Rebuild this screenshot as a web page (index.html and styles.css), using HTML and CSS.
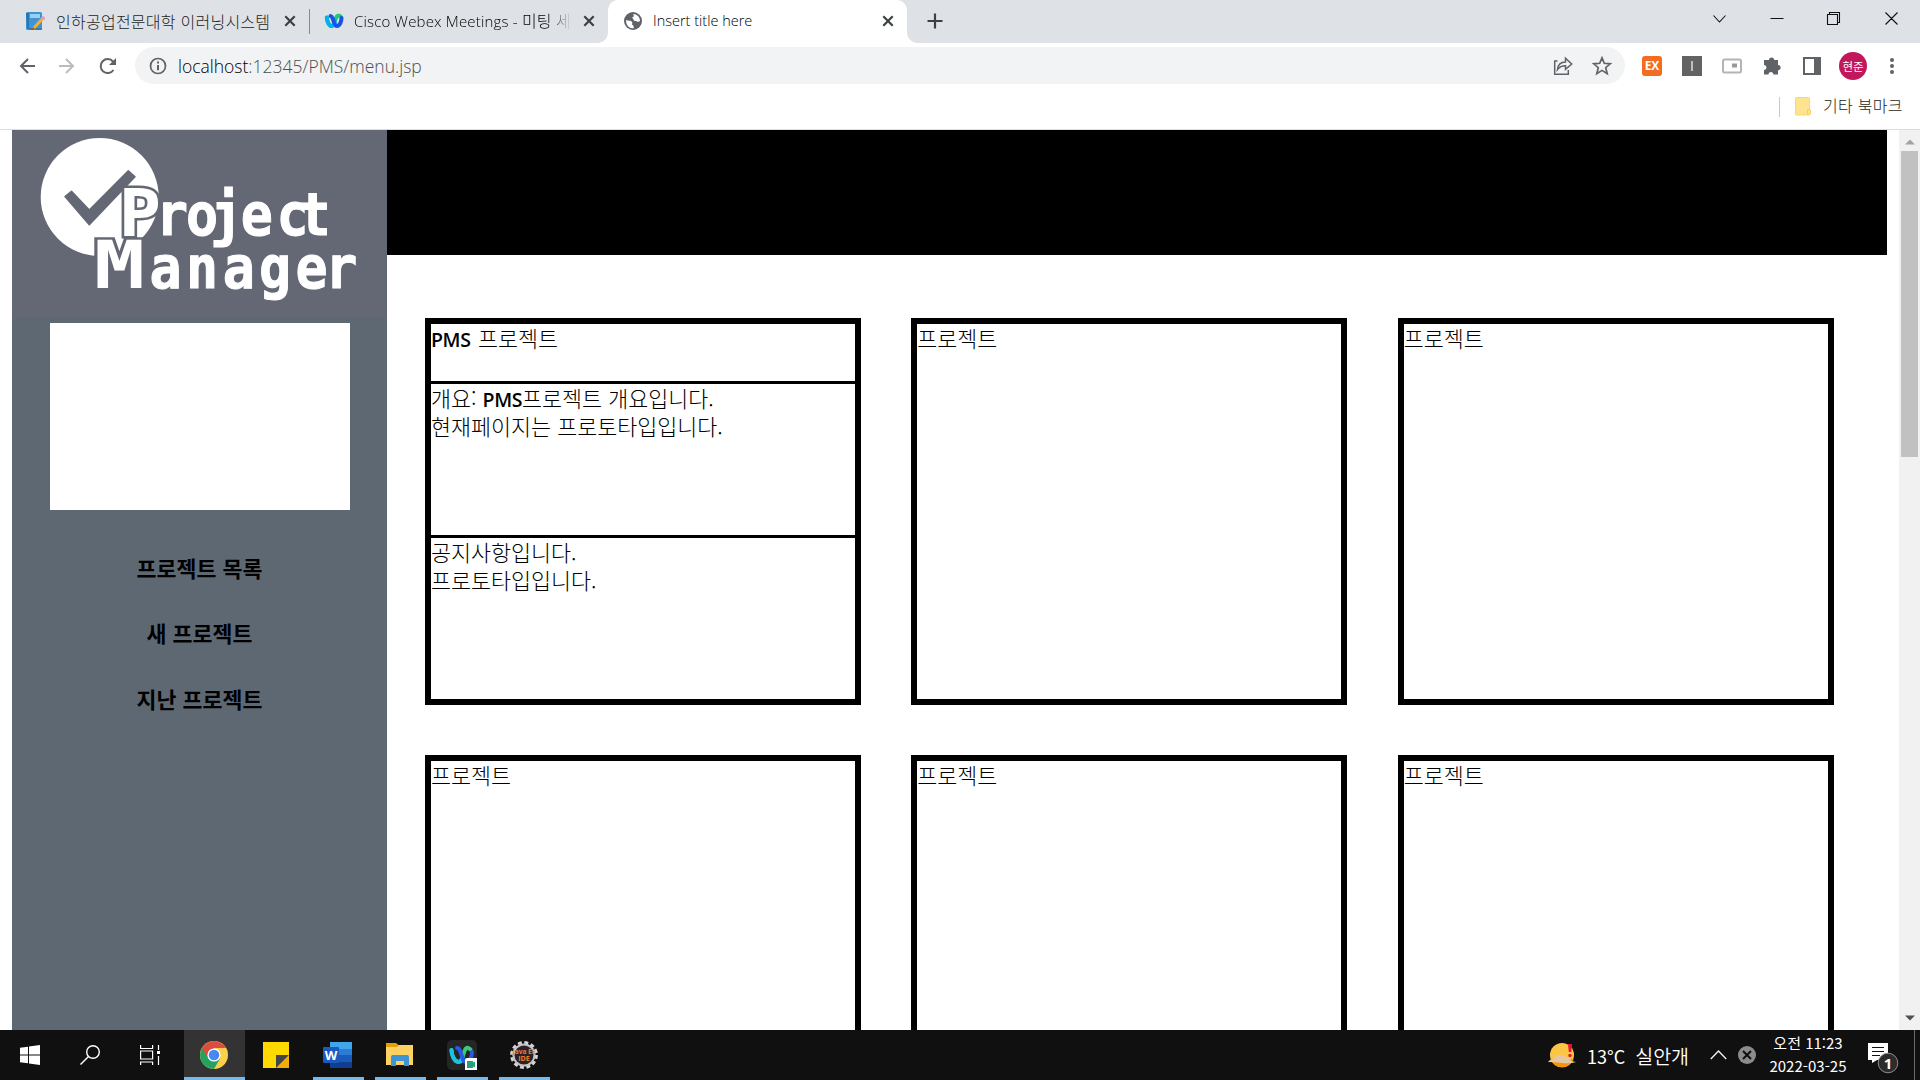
FILE: index.html
```html
<!DOCTYPE html>
<html lang="ko">
<head>
<meta charset="utf-8">
<title>Insert title here</title>
<link rel="stylesheet" href="styles.css">
</head>
<body>
<div class="window">
  <header class="tabstrip">
    <div class="tab tab-first">
      <svg class="favicon" width="20" height="20" viewBox="0 0 20 20"><rect x="1" y="1" width="16" height="18" rx="1.5" fill="#3f94d4"/><path d="M1 2h3v16H2z" fill="#2378b5"/><path d="M5 3h10v4H5z" fill="#9bd0f2"/><path d="M4 18h13" stroke="#1d679f"/><path d="M18 7 8 18" stroke="#f6ad38" stroke-width="3"/><path d="m17 6 3 2" stroke="#dba0c5" stroke-width="3"/><path d="m7 19 1-3 2 2z" fill="#875025"/></svg>
      <span class="tab-title t1">인하공업전문대학 이러닝시스템</span>
      <svg class="close" width="12" height="12" viewBox="0 0 12 12"><path d="m1.3 1.3 9.4 9.4m0-9.4-9.4 9.4"/></svg>
    </div>
    <div class="tab tab-second">
      <svg class="favicon" width="20" height="16" viewBox="0 0 20 16"><path d="M2.8 4.5C3.2 9 5 13 7.5 13s3-4 4.5-8c.9-2.5 3-3 4.6-1.5" fill="none" stroke="#22c96c" stroke-width="4" stroke-linecap="round"/><path d="M2.8 4.5C3.2 9 5 13 7.5 13s3.6-3 3.2-6" fill="none" stroke="#00b2ee" stroke-width="4" stroke-linecap="round"/><path d="M6.5 3c3 0 3 10 6.3 10C16 13 17.5 8 17.5 5" fill="none" stroke="#1754e6" stroke-width="4" stroke-linecap="round"/></svg>
      <span class="tab-title t2">Cisco Webex Meetings - <span class="ko">미팅 세</span></span>
      <svg class="close" width="12" height="12" viewBox="0 0 12 12"><path d="m1.3 1.3 9.4 9.4m0-9.4-9.4 9.4"/></svg>
    </div>
    <div class="tab tab-active">
      <svg class="favicon" width="18" height="18" viewBox="0 0 18 18"><circle cx="9" cy="9" r="9" fill="#5f6368"/><path d="M2 8c2 1 5 0 6 2 1 1-1 3 1 3l1 3c-4 1-8-2-8-8zM9 2c4 0 7 3 7 7l-2 1c-1-1-2-1-3-1-2 0-1-3-3-3 0-1 2-1 2-2z" fill="#fff"/></svg>
      <span class="tab-title t3">Insert title here</span>
      <svg class="close" width="12" height="12" viewBox="0 0 12 12"><path d="m1.3 1.3 9.4 9.4m0-9.4-9.4 9.4"/></svg>
    </div>
    <svg class="newtab" width="16" height="16" viewBox="0 0 16 16"><path d="M8 .5v15M.5 8h15" stroke="#3c4043" stroke-width="2.2"/></svg>
    <svg class="window-controls" width="184" height="16" viewBox="0 0 184 16" fill="none" stroke="#111" stroke-width="1.1"><path d="m.5 4.500 6 6.500 6-6.500M57.500 7.500h13M114.500 3.500h10v10h-10zM116.500 3.500v-2h10v10h-2M172.500 1.500l12 12m0-12-12 12"/></svg>
  </header>

  <div class="toolbar">
    <svg class="nav" width="100" height="20" viewBox="0 0 100 20" fill="none" stroke="#5f6368" stroke-width="2"><path d="M16 10H2m7-7-7 7 7 7"/><path d="M40 10h14m-7-7 7 7-7 7" stroke="#babcbe"/><path d="M94.500 14a7 7 0 1 1-.5-8.500"/><path d="M97 2v7h-7z" fill="#5f6368" stroke="none"/></svg>
    <div class="omnibox">
      <svg width="18" height="18" viewBox="0 0 18 18"><circle cx="9" cy="9" r="7.500" fill="none" stroke="#5f6368" stroke-width="1.700"/><path d="M9 8v5.200M9 4.600v2" stroke="#5f6368" stroke-width="2"/></svg>
      <span class="url"><span class="host">localhost</span>:12345/PMS/menu.jsp</span>
      <svg class="share" width="60" height="20" viewBox="0 0 60 20" fill="none" stroke="#5f6368" stroke-width="1.500"><path d="M4.500 5H1.700v13.300h13.600V14"/><path d="M4.500 13.500C5 8.500 8 6 12.500 6V2.300L18.700 8l-6.200 5.300V9.700C9 9.700 6.500 10.800 4.500 13.500z"/><path d="m49 1.800 2.300 5.500 6 .5-4.600 3.900 1.500 5.900L49 14.400l-5.200 3.200 1.500-5.900-4.600-3.900 6-.5z" stroke-width="1.700"/></svg>
    </div>
    <div class="extensions">
      <span class="ext ex">EX</span>
      <svg width="20" height="20" viewBox="0 0 20 20"><path d="M0 0h20v20H0z" fill="#636363"/><path d="M10 5v10" stroke="#ddd" stroke-width="1.500"/></svg>
      <svg width="20" height="16" viewBox="0 0 20 16"><rect x="1" y="1.500" width="18" height="13" rx="1.500" fill="#fff" stroke="#b4b4b4" stroke-width="2"/><path d="M10 5.500h5v4h-5z" fill="#9a9a9a"/></svg>
      <svg width="20" height="20" viewBox="0 0 20 20"><path d="M2 4h5a2.600 2.600 0 0 1 5.200 0H16v5a2.600 2.600 0 0 1 0 5.200V18.500h-4.500a2.500 2.500 0 0 0-5 0H2v-4.500a2.500 2.500 0 0 0 0-5z" fill="#5f6368"/></svg>
      <svg width="20" height="20" viewBox="0 0 20 20"><path d="M2 2h16v16H2z" fill="none" stroke="#5f6368" stroke-width="2"/><path d="M12 2h6v16h-6z" fill="#5f6368"/></svg>
      <span class="avatar">현준</span>
      <svg class="more" width="6" height="18" viewBox="0 0 6 18" fill="#5f6368"><circle cx="3" cy="3" r="2"/><circle cx="3" cy="9" r="2"/><circle cx="3" cy="15" r="2"/></svg>
    </div>
  </div>

  <div class="bookmarks">
    <span class="divider"></span>
    <svg width="17" height="19" viewBox="0 0 17 19"><rect x=".5" y=".5" width="14" height="17.500" rx="1" fill="#ffe490" stroke="#fcd866"/><rect x="12.500" y="12.500" width="3" height="5" rx="1" fill="#ffe490" stroke="#f7cf50"/></svg>
    <span class="bookmark-name">기타 북마크</span>
  </div>

  <div class="viewport">
    <aside class="sidebar">
      <svg class="logo" width="375" height="188" viewBox="0 0 375 188">
        <circle cx="87.700" cy="67" r="59" fill="#fff"/>
        <path d="m53 66.500 6.500-5.200L77.300 80l39-39.300 6.700 6-45.700 48z" fill="#636874" stroke="#636874" stroke-width="1.500" stroke-linejoin="round"/>
        <g class="letters">
          <text class="cut" transform="translate(128 106) scale(1.080 1)">P</text>
          <text class="cut" transform="translate(107.500 158) scale(1.300 1)">M</text>
          <text class="run" transform="scale(.92 1)" y="105" x="174 206.500 233 266 305 329">roject</text>
          <text class="run" transform="scale(.92 1)" y="158" x="167 206.500 246.500 286 325.500 358">anager</text>
        </g>
      </svg>
      <div class="profile"></div>
      <nav class="menu"><a>프로젝트 목록</a><a>새 프로젝트</a><a>지난 프로젝트</a></nav>
    </aside>
    <main class="content">
      <div class="banner"></div>
      <div class="cards">
        <section class="card">
          <div class="card-title"><b>PMS</b> 프로젝트</div>
          <div class="card-summary">개요: <b>PMS</b>프로젝트 개요입니다.<br>현재페이지는 프로토타입입니다.</div>
          <div class="card-notice">공지사항입니다.<br>프로토타입입니다.</div>
        </section>
        <section class="card">프로젝트</section>
        <section class="card">프로젝트</section>
        <section class="card">프로젝트</section>
        <section class="card">프로젝트</section>
        <section class="card">프로젝트</section>
      </div>
    </main>
    <div class="scrollbar">
      <svg width="10" height="6" viewBox="0 0 10 6"><path d="m0 5.500 5-5 5 5z" fill="#a3a3a3"/></svg>
      <div class="thumb"></div>
      <svg width="10" height="6" viewBox="0 0 10 6"><path d="m0 .5 5 5 5-5z" fill="#505050"/></svg>
    </div>
  </div>

  <footer class="taskbar">
    <div class="task start"><svg width="20" height="20" viewBox="0 0 20 20"><path d="M0 2.800 8 1.700v7.800H0zM9 1.500 20 0v9.500H9zM0 10.500h8v7.800l-8-1.100zM9 10.500h11V20L9 18.500z" fill="#fff"/></svg></div>
    <div class="task search"><svg width="20" height="20" viewBox="0 0 20 20" fill="none" stroke="#fff" stroke-width="1.400"><circle cx="13" cy="7" r="6.300"/><path d="M8.500 11.500.5 19.500"/></svg></div>
    <div class="task view"><svg width="20" height="20" viewBox="0 0 20 20" fill="none" stroke="#fff" stroke-width="1.200"><path d="M.6 0v3.500h12V0M.6 6h12v8H.6zM.6 20v-3h12v3M18.500 0v5M18.500 11v9"/><path d="M17 6h3v3h-3z" fill="#fff" stroke="none"/></svg></div>
    <div class="task chrome"><svg width="28" height="28" viewBox="0 0 28 28"><circle cx="14" cy="14" r="14" fill="#fdd04b"/><path d="M14 14 1.900 7A14 14 0 0 0 14 28l6.100-10.500z" fill="#24a260"/><path d="M1.900 7A14 14 0 0 1 26.100 7H14l-6 10z" fill="#dc4c40"/><circle cx="14" cy="14" r="6.600" fill="#fff"/><circle cx="14" cy="14" r="5.300" fill="#4688f4"/></svg></div>
    <div class="task note"><svg width="26" height="26" viewBox="0 0 26 26"><path d="M0 0h26v26H0z" fill="#ffd900"/><path d="M13 26h13V13z" fill="#f2ae0b"/><path d="M13 13h13L13 26z" fill="#454545"/></svg></div>
    <div class="task running"><svg width="30" height="28" viewBox="0 0 30 28"><path d="M7 1h22v7H7z" fill="#41a5ee"/><path d="M7 8h22v6H7z" fill="#2b7cd3"/><path d="M7 14h22v7H7z" fill="#185abd"/><path d="M7 21h22v6H7z" fill="#103f91"/><rect y="6" width="16" height="16" rx="1" fill="#185abd"/><text x="8" y="18.500" class="word">W</text></svg></div>
    <div class="task running"><svg width="28" height="24" viewBox="0 0 28 24"><path d="M0 0h10l2.500 2H27v7H0z" fill="#e2a106"/><path d="M0 4h11l2-2h14v20H0z" fill="#fdd262"/><path d="M5 23V14q0-2 2-2h14q2 0 2 2v9h-5v-5h-8v5z" fill="#3c94d5"/></svg></div>
    <div class="task running"><svg width="30" height="30" viewBox="0 0 30 30"><rect width="30" height="30" rx="5" fill="#252525"/><path d="M4.500 10c0 5 3 12 7 12s4-8 7-13c1.500-2 3.500-1 5 .5" fill="none" stroke="#38cb75" stroke-width="4" stroke-linecap="round"/><path d="M4.500 10c0 5 3 12 7 12 3 0 4-3 4-6" fill="none" stroke="#1ac0e8" stroke-width="4" stroke-linecap="round"/><path d="M10 8c5 0 4 14 9 14 4 0 6-6 6-10" fill="none" stroke="#2758e8" stroke-width="4" stroke-linecap="round"/><path d="M18 30V20q0-2 2-2h10v12z" fill="#fff"/><path d="M20 21h6v1.500l2-1v6l-2-1V28h-6z" fill="#27a17b"/></svg></div>
    <div class="task running"><svg width="28" height="28" viewBox="0 0 28 28"><circle cx="14" cy="14" r="12.400" fill="none" stroke="#d5d5d5" stroke-width="3" stroke-dasharray="3.900 2.590"/><circle cx="14" cy="14" r="10.500" fill="#28222e" stroke="#c4c4c4" stroke-width="2"/><text x="14" y="13" class="ide" textLength="23" lengthAdjust="spacingAndGlyphs">Java EE</text><text x="14" y="20" class="ide">IDE</text></svg></div>
    <div class="tray">
      <svg class="weather" width="28" height="25" viewBox="0 0 28 25"><circle cx="14" cy="12" r="12" fill="#fdc544"/><path d="M2.500 16h23A12 12 0 0 1 2.500 16z" fill="#f6930e"/><path d="M0 19q2-3 6-3 0-4 5-4 5-1 7 3 4-1 5 3l5 1q-5 2-14 1T0 19z" fill="#e6c7a2"/><path d="M20 1h4l-.7 8h-2.500z" fill="#e81232"/><circle cx="22" cy="12.500" r="1.700" fill="#e81232"/></svg>
      <span class="weather-text">13°C&nbsp; <span class="haze">실안개</span></span>
      <svg class="chevron" width="17" height="10" viewBox="0 0 17 10"><path d="m.8 9 7.700-8 7.700 8" fill="none" stroke="#eee" stroke-width="1.400"/></svg>
      <svg class="status" width="18" height="18" viewBox="0 0 18 18"><circle cx="9" cy="9" r="9" fill="#8c8c8c"/><path d="m5 5 8 8m0-8-8 8" stroke="#101010" stroke-width="2"/></svg>
      <div class="clock"><span>오전 11:23</span><span class="date">2022-03-25</span></div>
      <svg class="notifications" width="31" height="31" viewBox="0 0 31 31"><path d="M0 0h20v17H9l-5 3v-3H0z" fill="#fff"/><path d="M4 4.500h12M4 8.500h12M4 12.500h8" stroke="#101010" stroke-width="1.200"/><circle cx="20" cy="20" r="9.800" fill="#2c2c2c" stroke="#8c8c8c"/><text x="20" y="25.500" class="count">1</text></svg>
      <span class="desktop-edge"></span>
    </div>
  </footer>
</div>
</body>
</html>
```
FILE: styles.css
```css
* { box-sizing: border-box; }
body { margin: 0; font-family: "Noto Sans CJK KR", sans-serif; background: #fff; overflow: hidden; }
svg { display: block; flex: none; }
.window { width: 1920px; height: 1080px; display: flex; flex-direction: column; overflow: hidden; }

.tabstrip { height: 43px; flex: none; display: flex; background: #dee1e6; color: #1c1e20; }
.tab { display: flex; align-items: center; height: 43px; padding-bottom: 1px; }
.tab-title { font-size: 16px; font-weight: 300; line-height: 24px; white-space: nowrap; overflow: hidden; padding-bottom: 1px; }
.close { fill: none; stroke: #3c4043; stroke-width: 2.2; }
.tab-first { width: 310px; padding-left: 25px; }
.tab-first::after { content: ""; width: 1px; height: 25px; margin-left: 13px; background: #858a90; }
.t1 { width: 215px; margin: 0 14px 0 11px; letter-spacing: .25px; }
.tab-second { width: 298px; padding-left: 14px; }
.t2 { width: 218px; margin: 0 11px 0 10px; font-family: "Open Sans", "Noto Sans CJK KR", sans-serif; font-size: 15px; letter-spacing: .18px; color: #000; -webkit-mask-image: linear-gradient(90deg, #000 88%, transparent); mask-image: linear-gradient(90deg, #000 88%, transparent); }
.ko { font-size: 16px; }
.tab-active { width: 299px; padding-left: 16px; background: #fff; border-radius: 10px 10px 0 0; position: relative; }
.tab-active::before, .tab-active::after { content: ""; position: absolute; bottom: 0; width: 10px; height: 10px; }
.tab-active::before { left: -10px; background: radial-gradient(circle at 0 0, transparent 9.5px, #fff 10px); }
.tab-active::after { right: -10px; background: radial-gradient(circle at 100% 0, transparent 9.5px, #fff 10px); }
.t3 { width: 219px; margin: 0 10px 0 11px; font-family: "Open Sans", sans-serif; font-size: 14.5px; color: #000; }
.newtab { margin: 13px 0 0 20px; }
.window-controls { margin: 11px 23px 0 auto; overflow: visible; }

.toolbar { height: 45px; flex: none; display: flex; align-items: center; }
.nav { margin-left: 19px; }
.omnibox { width: 1490px; height: 37px; margin-left: 16px; padding: 0 12px 0 14px; display: flex; align-items: center; border-radius: 19px; background: #f1f3f4; }
.url { margin-left: 11px; font-family: "Open Sans", sans-serif; font-weight: 300; font-size: 17.5px; line-height: 30px; color: #4b4f53; padding-top: 1px; }
.host { color: #000; }
.share { margin-left: auto; }
.extensions { display: flex; align-items: center; gap: 20px; margin-left: 17px; }
.ext { width: 20px; height: 20px; border-radius: 3px; background: #f36c21; color: #fff; font: bold 12px/20px "Open Sans", sans-serif; text-align: center; }
.avatar { width: 28px; height: 28px; margin: 0 -2px 0 -3px; border-radius: 50%; background: #c2185b; color: #fff; font-size: 11.5px; line-height: 28px; text-align: center; }
.more { margin-left: 4px; }

.bookmarks { height: 42px; flex: none; display: flex; align-items: center; justify-content: flex-end; padding: 0 17px 4px 0; border-bottom: 1px solid #dadce0; }
.divider { width: 1px; height: 20px; background: #c7c9cc; margin-right: 15px; }
.bookmark-name { width: 80px; margin-left: 11px; padding-bottom: 3px; font-size: 16px; font-weight: 300; letter-spacing: .3px; line-height: 24px; color: #1c1e20; white-space: nowrap; }

.viewport { height: 900px; flex: none; display: flex; padding-left: 12px; overflow: hidden; }
.sidebar { width: 375px; background: #5d6873; flex: none; }
.logo { background: #636874; }
.letters { font-family: "DejaVu Sans Mono", monospace; font-weight: bold; font-size: 58px; text-anchor: middle; fill: #fff; }
.run { stroke: #fff; stroke-width: 1px; }
.cut { font-size: 65px; stroke: #636874; stroke-width: 5px; paint-order: stroke; }
.profile { width: 300px; height: 187px; margin: 5px 0 0 38px; background: #fff; }
.menu { display: flex; flex-direction: column; align-items: center; gap: 37.5px; margin-top: 43.5px; }
.menu a { font-size: 21.7px; font-weight: 700; line-height: 28px; color: #000; }
.content { width: 1500px; flex: none; }
.banner { height: 125px; background: #000; }
.cards { display: grid; grid-template-columns: repeat(3, 436px); grid-auto-rows: 387px; gap: 50px 50.33px; padding: 63px 0 0 38px; }
.card { border: 6px solid #000; font-size: 21.75px; font-weight: 300; line-height: 28px; color: #000; white-space: nowrap; display: flex; flex-direction: column; }
.card b { font-family: "Open Sans", sans-serif; font-size: 19.5px; font-weight: 600; letter-spacing: -.4px; line-height: 20px; }
.card-title { height: 60px; border-bottom: 3px solid #000; word-spacing: 1.5px; }
.card-summary { height: 154px; border-bottom: 3px solid #000; }
.scrollbar { width: 21px; height: 900px; margin-left: 12px; display: flex; flex-direction: column; align-items: center; background: #f1f1f1; padding: 9px 0; }
.thumb { width: 17px; height: 306px; margin: 6px 0 auto; background: #c1c1c1; }

.taskbar { height: 50px; flex: none; display: flex; background: #101010; color: #fff; }
.task { width: 62px; height: 50px; display: flex; align-items: center; justify-content: center; }
.start, .search { width: 60px; }
.view { width: 64px; padding-right: 4px; }
.chrome { width: 61px; background: #333; border-bottom: 3px solid #76b9ed; padding: 3px 2px 0 0; margin-right: 1px; }
.note { width: 61px; padding-right: 2px; }
.running { width: 51px; margin: 0 5px 0 6px; border-bottom: 3px solid #76b9ed; padding: 3px 2px 0 0; }
.word { fill: #fff; font: bold 13px "Open Sans", sans-serif; text-anchor: middle; }
.ide { fill: #f07b22; font: bold 7px "Open Sans", sans-serif; text-anchor: middle; }
.tray { margin-left: auto; display: flex; align-items: center; }
.weather-text { width: 103px; margin-left: 11px; font-size: 18px; line-height: 28px; white-space: nowrap; padding-top: 1px; }
.haze { font-size: 19.5px; font-weight: 350; }
.chevron { margin-left: 20px; }
.status { margin-left: 11px; }
.clock { width: 80px; margin: 0 0 2px 12px; display: flex; flex-direction: column; align-items: center; font-size: 15px; line-height: 23px; white-space: nowrap; }
.notifications { margin: 7px 15px 0 20px; }
.count { fill: #fff; font: bold 15px "Open Sans", sans-serif; text-anchor: middle; }
.desktop-edge { width: 1px; height: 50px; margin-right: 5px; background: #6c6c6c; }
```
